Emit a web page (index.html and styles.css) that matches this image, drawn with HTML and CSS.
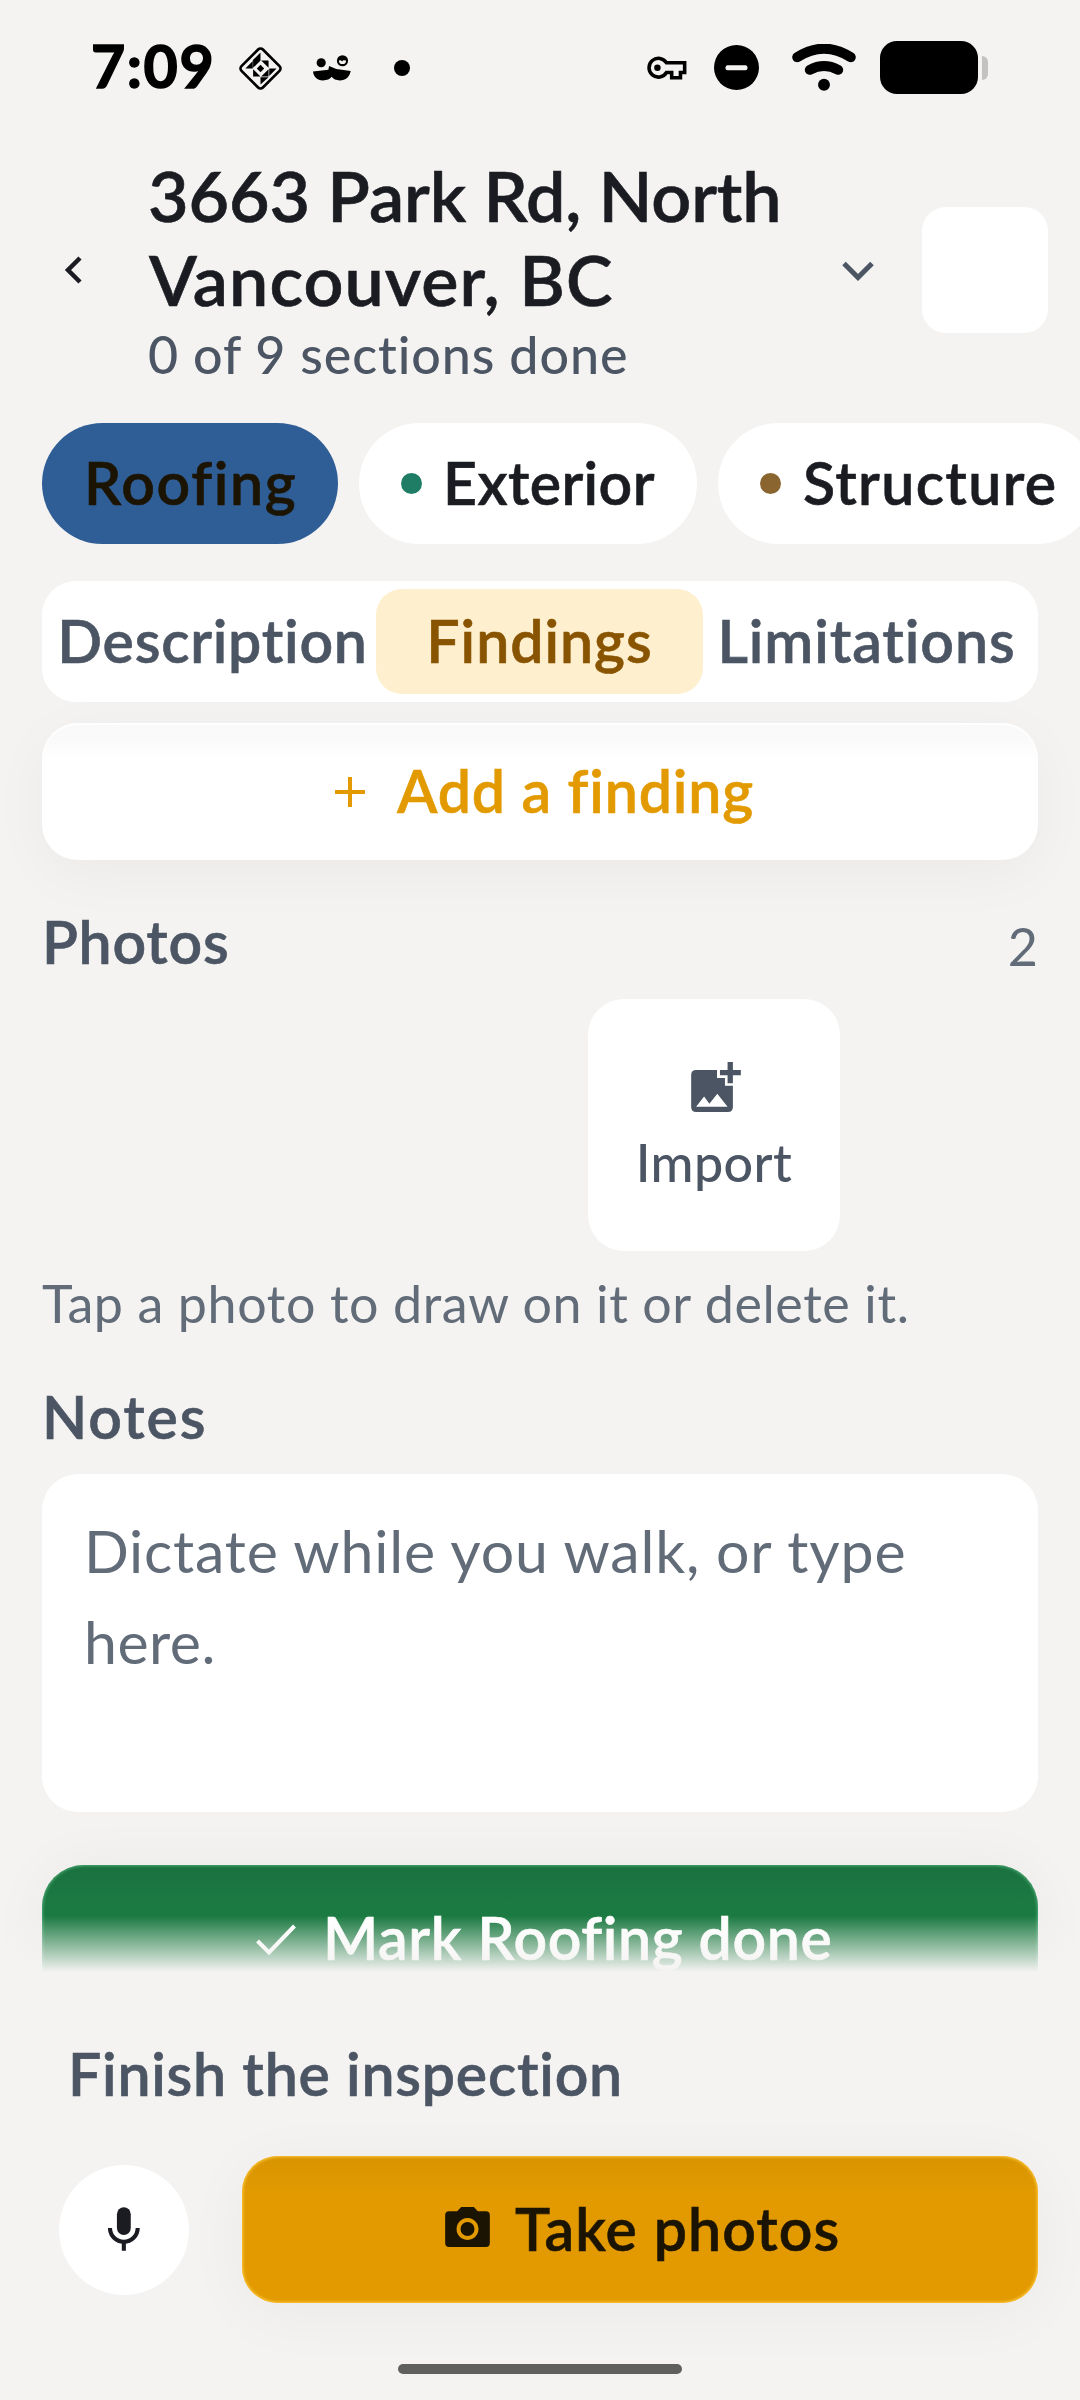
FILE: index.html
```html
<!DOCTYPE html>
<html lang="en">
<head>
<meta charset="utf-8">
<title>Inspection</title>
<link rel="stylesheet" href="styles.css">
</head>
<body>
<div class="screen">
  <div class="status">
    <span class="time">7:09</span>
    <svg class="s-diamond" viewBox="534 78 134 134"><rect x="556" y="100" width="90" height="90" rx="10" transform="rotate(45 601 145)" fill="none" stroke="#000" stroke-width="8"/><path d="M601 97v24h-24zM556 145l22-22v22zM579 121h22l-22 22zM603 121h22v22zM579 147v22h22zM649 145l-22 22v-22zM603 169l22-22v22zM601 193v-22h24zM601 134l11 11-11 11-11-11z"/></svg>
    <svg class="s-face" viewBox="758 104 116 78"><circle cx="783" cy="127" r="14"/><circle cx="848" cy="121" r="17"/><path d="M837 120a11 11 0 0 0 22 0l-9-1-3 4-4-4z" fill="#f4f3f2"/><path d="M758 154l47-6 2-11 22 9 44 6c-3 18-15 29-33 29-12 0-20-4-25-11-5 7-14 11-27 11-17 0-28-10-30-27z"/></svg>
    <span class="s-dot"></span>
    <svg class="s-key" viewBox="138 107 124 74"><path d="M256 128h-56a29 29 0 1 0 0 30h16v16h27v-16h13z" fill="none" stroke="#000" stroke-width="11"/><circle cx="172" cy="143" r="10"/></svg>
    <svg class="s-dnd" viewBox="343 74 136 136"><circle cx="411" cy="142" r="68"/><rect x="378" y="135" width="66" height="15" rx="6" fill="#f4f3f2"/></svg>
    <svg class="s-wifi" viewBox="576 72 192 142" fill="none" stroke="#000" stroke-linecap="round"><path d="M591 112q81-52 162 0M629 150q43-23 86 0" stroke-width="30"/><circle cx="672" cy="195" r="18" fill="#000" stroke="none"/></svg>
    <span class="battery"></span><span class="nub"></span>
  </div>

  <header class="header">
    <svg class="back" viewBox="0 0 18 28" fill="none" stroke="#1a1c22" stroke-width="4.500"><path d="M16 2L4 14l12 12"/></svg>
    <div class="heading">
      <h1><span class="t1">3663 Park Rd, North</span><br><span class="t2">Vancouver, BC</span></h1>
      <p class="sub">0 of 9 sections done</p>
    </div>
    <svg class="down" viewBox="0 0 32 20" fill="none" stroke="#4b5563" stroke-width="5"><path d="M2 2.500L16 16.500 30 2.500"/></svg>
    <div class="tile"></div>
  </header>

  <nav class="chips">
    <span class="chip active"><span class="c1">Roofing</span></span>
    <span class="chip"><i class="dot teal"></i><span class="c2">Exterior</span></span>
    <span class="chip third"><i class="dot brown"></i><span class="c3">Structure</span></span>
  </nav>

  <div class="tabs">
    <span class="tab"><span class="d1">Description</span></span>
    <span class="tab on"><span class="d2">Findings</span></span>
    <span class="tab"><span class="d3">Limitations</span></span>
  </div>

  <main class="scroll">
    <button class="add"><svg viewBox="0 0 30 30" stroke="#e29a00" stroke-width="4"><path d="M0 15h30M15 0v30"/></svg><span>Add a finding</span></button>

    <div class="row"><h2 class="photos">Photos</h2><span class="count">2</span></div>
    <div class="strip">
      <div class="import">
        <svg viewBox="453 246 150 151" fill="#4b5563"><path d="M468 270h63v24h24v24h24v64q0 15-15 15h-96q-15 0-15-15v-97q0-15 15-15zM468 381h95l-31-39-24 30-16-22z" fill-rule="evenodd"/><path d="M563 246h16v24h24v16h-24v24h-16v-24h-23v-16h23z"/></svg>
        <span>Import</span>
      </div>
    </div>
    <p class="hint">Tap a photo to draw on it or delete it.</p>

    <h2 class="notes">Notes</h2>
    <div class="field"><span class="f1">Dictate while you walk, or type</span><br><span class="f2">here.</span></div>

    <button class="done"><svg viewBox="0 0 40 31" fill="none" stroke="#fff" stroke-width="4"><path d="M1.500 17L13 28.500 38.500 2"/></svg><span>Mark Roofing done</span></button>
    <div class="fade"></div>
  </main>

  <footer class="footer">
    <p class="finish">Finish the inspection</p>
    <div class="actions">
      <span class="mic"><svg viewBox="265 201 97 132"><rect x="292" y="201" width="42" height="84" rx="21" fill="#1a1c22"/><path d="M271 264a42 42 0 0 0 84 0M313 306v27" fill="none" stroke="#1a1c22" stroke-width="12.500"/></svg></span>
      <button class="take"><svg viewBox="645 202 134 120" fill="#1c1403"><path d="M657 215h24l12-13h38l12 13h24q12 0 12 12v83q0 12-12 12H657q-12 0-12-12v-83q0-12 12-12zM712 235a33 33 0 1 0 .1 0z" fill-rule="evenodd"/><circle cx="712" cy="268" r="21"/></svg><span>Take photos</span></button>
    </div>
    <div class="homebar"></div>
  </footer>
</div>
</body>
</html>
```
FILE: styles.css
```css
* { box-sizing: border-box; margin: 0; padding: 0; }
body { background: #f4f3f2; font-family: Lato, "Open Sans", sans-serif; font-variant-ligatures: none; color: #1a1c22; }
svg { display: block; flex: none; }
button { border: 0; font: inherit; }
span { white-space: nowrap; }
h1, h2, .chip, .tab, .add, .done, .take, .finish { font-weight: 600; -webkit-text-stroke: 0.6px currentColor; }
.screen { width: 1080px; height: 2400px; overflow: hidden; display: flex; flex-direction: column; }

.status { height: 152px; flex: none; display: flex; align-items: center; padding: 0 92px 17px 91px; }
.time { width: 147px; font-size: 59px; font-weight: 700; line-height: 60px; color: #000; letter-spacing: 1.6px; -webkit-text-stroke: 1.5px #000; padding-bottom: 3px; }
.s-diamond { width: 45px; height: 45px; margin-top: 1px; }
.s-face { width: 38px; height: 26px; margin-left: 30px; }
.s-dot { width: 16px; height: 16px; border-radius: 50%; background: #000; margin-left: 43px; }
.s-key { width: 41px; height: 24px; margin-left: auto; }
.s-dnd { width: 45px; height: 45px; margin-left: 27px; }
.s-wifi { width: 64px; height: 47px; margin-left: 33px; }
.battery { width: 98px; height: 53px; border-radius: 17px; background: #000; margin-left: 24px; }
.nub { width: 6px; height: 24px; border-radius: 0 6px 6px 0; background: #c3c2c1; margin-left: 4px; }

.header { height: 271px; flex: none; display: flex; align-items: flex-start; padding-left: 64px; }
.back { width: 18px; height: 28px; margin-top: 104px; }
.heading { width: 693px; margin-left: 66px; }
h1 { font-size: 70px; line-height: 84px; padding-top: 1px; white-space: nowrap; }
.t1 { letter-spacing: -0.1px; }
.t2 { letter-spacing: 1.05px; margin-left: 1px; }
.sub { margin: 2px 0 0; font-size: 52px; font-weight: 500; line-height: 62px; letter-spacing: 0.9px; color: #4b5563; }
.down { width: 32px; height: 20px; margin: 109px 0 0 1px; }
.tile { width: 126px; height: 126px; border-radius: 24px; background: #fff; margin: 55px 0 0 48px; }

.chips { display: flex; flex: none; gap: 21px; padding-left: 42px; height: 121px; }
.chip { flex: none; height: 121px; border-radius: 60.5px; background: #fff; display: flex; align-items: center; padding: 0 0 3px 42px; font-size: 59px; width: 338px; }
.chip.active { width: 296px; background: #2f5d95; color: #1c1403; }
.chip.third { width: 379px; }
.dot { width: 21px; height: 21px; border-radius: 50%; margin: 3px 22px 0 0; flex: none; }
.teal { background: #1f7d66; }
.brown { background: #8a652f; }
.c1 { letter-spacing: 1.65px; }
.c2 { letter-spacing: 0.4px; margin-left: -1px; }
.c3 { letter-spacing: 1.35px; }

.tabs { flex: none; display: flex; margin: 37px 42px 0; height: 121px; border-radius: 34px; background: #fff; padding: 8px 8px 8px 7px; }
.tab { flex: 1 1 0; min-width: 0; display: flex; justify-content: center; align-items: center; border-radius: 26px; padding-bottom: 3px; font-size: 59px; color: #4b5563; }
.tab.on { background: #feefcf; color: #895400; }
.d1 { letter-spacing: 0.75px; }
.d2 { letter-spacing: 0.95px; }
.d3 { letter-spacing: 0.9px; }

.scroll { position: relative; flex: none; height: 1270px; overflow: hidden; padding: 21px 42px 0; }
.add { width: 996px; height: 137px; border-radius: 36px; background: linear-gradient(#f9f9f9, #fafafa 15px, #fff 36px); display: flex; align-items: center; padding-left: 293px; color: #e29a00; font-size: 59px; box-shadow: 0 14px 60px rgba(0,0,0,.04), inset 0 2px 2px #fff; }
.add svg { width: 30px; height: 30px; }
.add span { margin-left: 32px; letter-spacing: 0.85px; padding-bottom: 3px; }

.row { display: flex; justify-content: space-between; height: 139px; padding-top: 47px; }
h2 { font-size: 59px; color: #4b5563; line-height: 70px; }
.photos { letter-spacing: 0.75px; }
.count { font-size: 52px; line-height: 62px; margin-top: 8px; color: #626c79; }
.strip { display: flex; justify-content: flex-end; padding-right: 198px; }
.import { width: 252px; height: 252px; border-radius: 36px; background: #fff; display: flex; flex-direction: column; align-items: center; padding-top: 63px; }
.import svg { width: 50px; height: 50px; margin-left: 4px; }
.import span { margin-top: 19px; font-size: 52px; font-weight: 500; line-height: 62px; color: #4b5563; letter-spacing: 0.4px; }
.hint { margin: 21px 0 0; font-size: 52px; line-height: 62px; letter-spacing: 0.6px; color: #626c79; white-space: nowrap; }
.notes { margin-top: 48px; letter-spacing: 1.9px; }
.field { margin-top: 22px; height: 338px; border-radius: 36px; background: #fff; padding: 31px 42px 0; font-size: 59px; line-height: 91px; color: #626c79; white-space: nowrap; }
.f1 { letter-spacing: 0.82px; }
.f2 { letter-spacing: 0.5px; }
.done { width: 996px; height: 147px; margin-top: 53px; border-radius: 42px; background: linear-gradient(#1a713f, #1b7a41 40px); display: flex; align-items: center; padding-left: 214px; color: #fff; font-size: 59px; box-shadow: 0 0 60px rgba(0,0,0,.045), inset 0 0 3px 1px #4fab78; }
.done svg { width: 40px; height: 31px; margin-top: 1px; }
.done span { margin-left: 27px; letter-spacing: 0.6px; padding-bottom: 3px; }
.fade { position: absolute; left: 0; right: 0; bottom: 0; height: 56px; background: linear-gradient(rgba(244,243,242,0), #f4f3f2); }

.footer { flex: 1; padding: 67px 42px 0; }
.finish { margin-left: 26px; font-size: 59px; line-height: 70px; letter-spacing: 0.75px; color: #4b5563; }
.actions { display: flex; align-items: center; margin-top: 47px; padding-left: 17px; }
.mic { width: 130px; height: 130px; border-radius: 50%; background: #fff; display: flex; justify-content: center; padding-top: 42px; }
.mic svg { width: 32px; height: 44px; }
.take { width: 796px; height: 147px; margin-left: 53px; border-radius: 36px; background: linear-gradient(#d89400, #e29a00 38px); display: flex; align-items: center; padding-left: 203px; color: #1c1403; font-size: 59px; box-shadow: 0 10px 66px rgba(0,0,0,.045), inset 0 0 3px 1px #ffc93c; }
.take svg { width: 45px; height: 40px; margin-bottom: 5px; }
.take span { margin-left: 25px; letter-spacing: 1.05px; padding-bottom: 3px; }
.homebar { width: 284px; height: 10px; border-radius: 5px; background: #60605e; margin: 61px auto 0; }
```
